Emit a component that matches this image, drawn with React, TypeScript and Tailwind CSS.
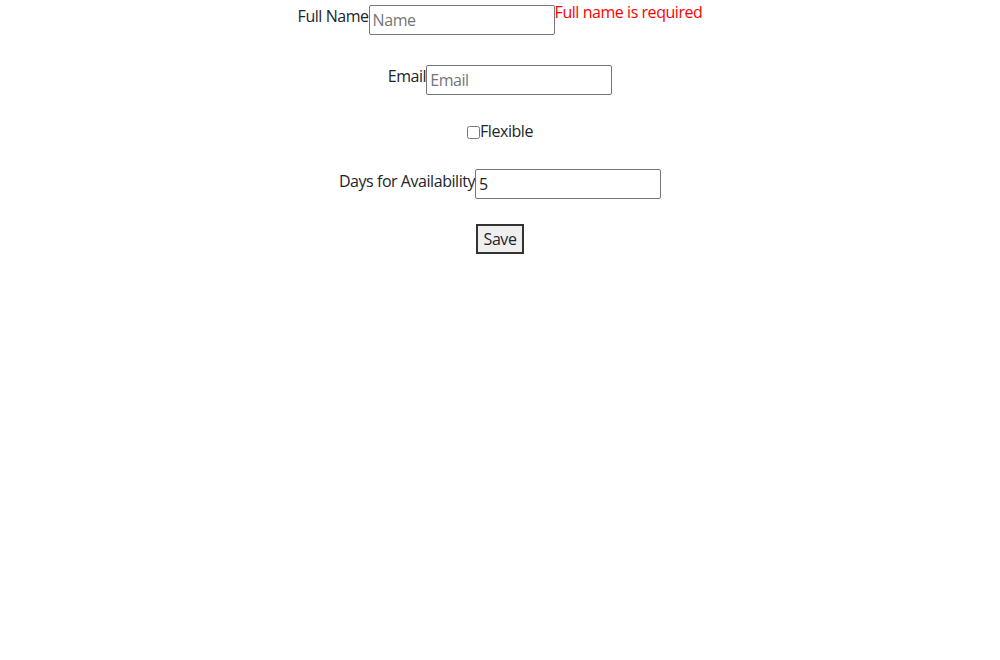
import React from "react";

export default function App() {
  const font = { fontFamily: '"Open Sans", "Noto Sans", sans-serif', letterSpacing: "-0.45px" };
  return (
    <div className="w-[1000px] h-[660px] bg-white text-[#212529] text-[16px] leading-[24px]" style={font}>
      <div className="flex justify-center items-start h-[64px]">
        <label className="mt-[4px]">Full Name</label>
        <input
          placeholder="Name"
          className="mt-[5px] w-[186px] h-[30px] border border-[#767676] rounded-[2px] px-[3px] placeholder:text-[#757575] outline-none"
        />
        <span className="text-[#ff0000]">Full name is required</span>
      </div>
      <div className="flex justify-center items-start h-[55px]">
        <label>Email</label>
        <input
          placeholder="Email"
          className="mt-[1px] w-[186px] h-[30px] border border-[#767676] rounded-[2px] px-[3px] placeholder:text-[#757575] outline-none"
        />
      </div>
      <div className="flex justify-center items-start h-[50px]">
        <input type="checkbox" className="w-[13px] h-[13px] m-0 mt-[7px]" />
        <label>Flexible</label>
      </div>
      <div className="flex justify-center items-start h-[55px]">
        <label>Days for Availability</label>
        <input
          defaultValue="5"
          className="w-[186px] h-[30px] border border-[#767676] rounded-[2px] px-[3px] outline-none"
        />
      </div>
      <div className="flex justify-center">
        <button className="w-[48px] h-[30px] bg-[#efefef] border-2 border-[#333] text-[16px]">Save</button>
      </div>
    </div>
  );
}
